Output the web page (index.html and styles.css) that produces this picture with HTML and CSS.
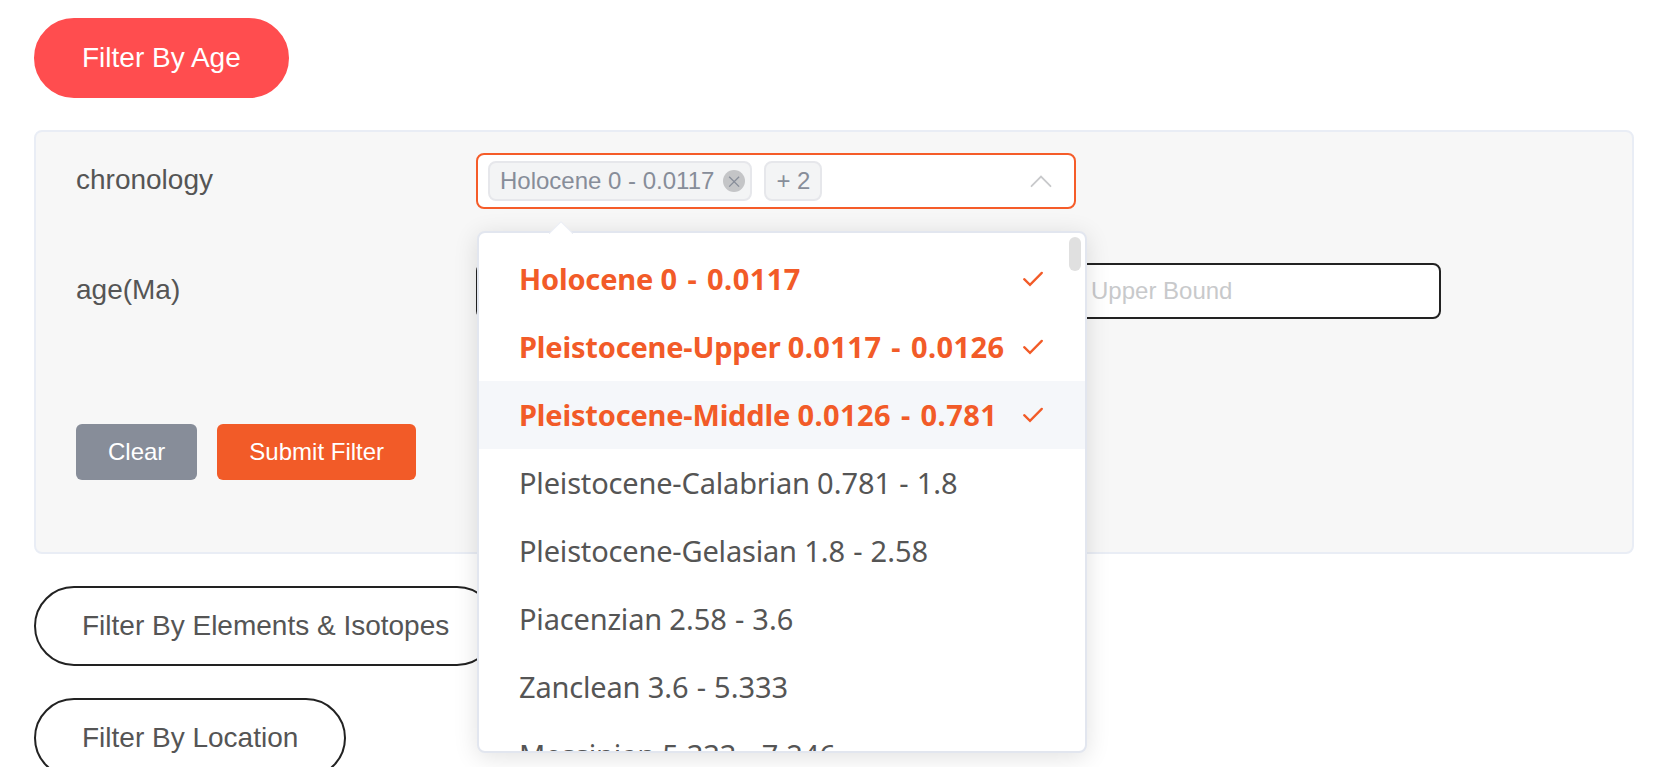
FILE: index.html
```html
<!DOCTYPE html>
<html lang="en">
<head>
<meta charset="utf-8">
<title>Filters</title>
<link rel="stylesheet" href="styles.css">
</head>
<body>
<main class="page">
  <button class="pill pill-active">Filter By Age</button>
  <section class="panel">
    <div class="row">
      <label class="label">chronology</label>
      <div class="select">
        <span class="tag">Holocene 0 - 0.0117
          <svg class="tag-close" viewBox="0 0 22 22"><circle cx="11" cy="11" r="11" fill="#c4c5c7"/><path d="M6.2 6.7l9.9 9.9M16.1 6.7l-9.9 9.9" stroke="#878d99" stroke-width="1.3" fill="none"/></svg>
        </span>
        <span class="tag">+ 2</span>
        <svg class="caret" viewBox="0 0 22 14"><path d="M1.5 12.2L11 2.5l9.5 9.7" fill="none" stroke="#c8c9cb" stroke-width="1.8" stroke-linecap="round"/></svg>
        <div class="dropdown">
          <svg class="arrow" viewBox="0 0 24 13"><path d="M0 12L12 0l12 12v1H0z" fill="#ebeef5"/><path d="M1 12.5L12 1.6l11 10.9v.5H1z" fill="#fff"/></svg>
          <ul class="options">
            <li class="option selected"><span class="text">Holocene <span class="range">0 <i>-</i> 0.0117</span></span><svg class="check" viewBox="0 0 20 15"><path d="M1.2 7.2l5.8 5.6L18.8 .9"/></svg></li>
            <li class="option selected"><span class="text">Pleistocene-Upper <span class="range">0.0117 <i>-</i> 0.0126</span></span><svg class="check" viewBox="0 0 20 15"><path d="M1.2 7.2l5.8 5.6L18.8 .9"/></svg></li>
            <li class="option selected hover"><span class="text">Pleistocene-Middle <span class="range">0.0126 <i>-</i> 0.781</span></span><svg class="check" viewBox="0 0 20 15"><path d="M1.2 7.2l5.8 5.6L18.8 .9"/></svg></li>
            <li class="option"><span class="text">Pleistocene-Calabrian <span class="range">0.781 <i>-</i> 1.8</span></span></li>
            <li class="option"><span class="text">Pleistocene-Gelasian <span class="range">1.8 <i>-</i> 2.58</span></span></li>
            <li class="option"><span class="text">Piacenzian <span class="range">2.58 <i>-</i> 3.6</span></span></li>
            <li class="option"><span class="text">Zanclean <span class="range">3.6 <i>-</i> 5.333</span></span></li>
            <li class="option"><span class="text">Messinian <span class="range">5.333 <i>-</i> 7.246</span></span></li>
          </ul>
          <span class="scrollbar"></span>
        </div>
      </div>
    </div>
    <div class="row">
      <label class="label">age(Ma)</label>
      <div class="bounds">
        <input class="input" placeholder="Lower Bound">
        <input class="input" placeholder="Upper Bound">
      </div>
    </div>
    <div class="actions">
      <button class="btn btn-grey">Clear</button>
      <button class="btn btn-orange">Submit Filter</button>
    </div>
  </section>
  <button class="pill">Filter By Elements &amp; Isotopes</button>
  <button class="pill">Filter By Location</button>
</main>
</body>
</html>
```
FILE: styles.css
```css
* { box-sizing: border-box; }
body {
  margin: 0;
  height: 767px;
  overflow: hidden;
  background: #fff;
  color: #555;
  font-family: "Liberation Sans", Arial, sans-serif;
}
.page {
  display: flex;
  flex-direction: column;
  align-items: flex-start;
  gap: 32px;
  padding: 18px 34px 0;
}
.pill {
  flex: none;
  height: 80px;
  padding: 0 46px;
  border: 2px solid #222;
  border-radius: 40px;
  background: #fff;
  color: #555;
  font: 28px "Liberation Sans", Arial, sans-serif;
}
.pill-active { border-color: #ff4d4f; background: #ff4d4f; color: #fff; }
.panel {
  flex: none;
  width: 1600px;
  height: 424px;
  padding: 21px 40px;
  border: 2px solid #e9edf5;
  border-radius: 8px;
  background: #f7f7f7;
}
.row { display: flex; height: 56px; margin-bottom: 54px; }
.label { width: 400px; font-size: 28px; line-height: 53px; }
.select {
  position: relative;
  display: flex;
  align-items: center;
  gap: 12px;
  width: 600px;
  height: 56px;
  padding: 0 22px 0 10px;
  border: 2px solid #f55c29;
  border-radius: 8px;
  background: #fff;
}
.tag {
  display: flex;
  align-items: center;
  gap: 9px;
  height: 40px;
  padding: 0 10px;
  border: 2px solid #e6e7eb;
  border-radius: 8px;
  background: #f3f4f5;
  color: #878d99;
  font-size: 24px;
  white-space: nowrap;
}
.tag:first-child { padding-right: 5px; }
.tag-close { width: 22px; height: 22px; }
.caret { width: 22px; height: 14px; margin-left: auto; }
.dropdown {
  position: absolute;
  z-index: 2;
  left: -1px;
  top: 76px;
  width: 610px;
  height: 522px;
  border: 2px solid #e2e6ef;
  border-radius: 8px;
  background: #fff;
  box-shadow: 0 4px 24px rgba(0, 0, 0, .12);
}
.arrow { position: absolute; left: 70px; top: -12px; width: 24px; height: 13px; }
.options { height: 518px; margin: 0; padding: 12px 0 0; overflow: hidden; list-style: none; }
.option {
  display: flex;
  align-items: center;
  justify-content: space-between;
  height: 68px;
  padding: 0 42px 0 40px;
  font-family: "Noto Sans", sans-serif;
  font-size: 29px;
  font-kerning: none;
  letter-spacing: -.18px;
  white-space: nowrap;
}
.text { padding-bottom: 2px; }
.range { letter-spacing: 0; }
.range i { margin: 0 .5px; font-style: normal; }
.selected { color: #f25b28; font-weight: 700; letter-spacing: -.18px; }
.selected .range { letter-spacing: .42px; }
.selected .range i { margin: 0 2px; }
.hover { background: #f5f7fa; }
.check { width: 20px; height: 15px; fill: none; stroke: #f25b28; stroke-width: 2.3; stroke-linecap: round; overflow: visible; }
.scrollbar { position: absolute; right: 4px; top: 4px; width: 12px; height: 34px; border-radius: 6px; background: #e0e0e0; }
.bounds { display: flex; width: 965px; }
.input {
  flex: 1;
  min-width: 0;
  height: 56px;
  padding: 0 30px;
  border: 2px solid #222;
  border-radius: 8px;
  background: #fff;
  font: 24px "Liberation Sans", Arial, sans-serif;
}
.input::placeholder { color: #c8c9cb; }
.bounds .input + .input { flex: 0 0 382px; }
.actions { display: flex; gap: 20px; padding-top: 51px; }
.btn {
  height: 56px;
  padding: 0 32px;
  border: 0;
  border-radius: 6px;
  color: #fff;
  font: 24px "Liberation Sans", Arial, sans-serif;
}
.btn-grey { background: #878d99; }
.btn-orange { background: #f25b28; }
```
